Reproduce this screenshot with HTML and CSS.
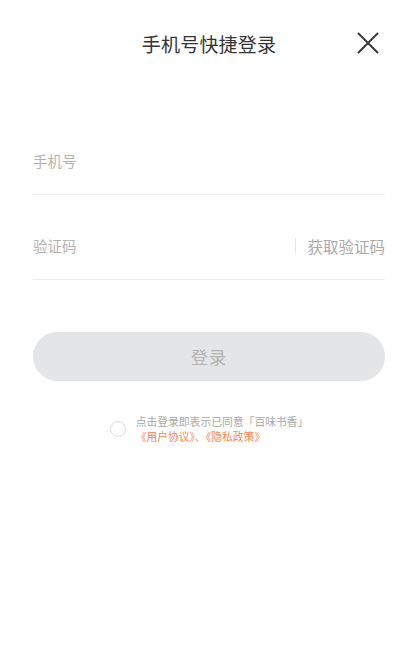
FILE: index.html
```html
<!DOCTYPE html>
<html lang="zh">
<head>
<meta charset="utf-8">
<link rel="stylesheet" href="styles.css">
</head>
<body>
<div class="page">
  <header class="header">
    <h1 class="title">手机号快捷登录</h1>
    <span class="close" aria-label="关闭">
      <svg width="22" height="22" viewBox="0 0 22 22"><path d="M1 1 L21 21 M21 1 L1 21" stroke="#333" stroke-width="1.8" fill="none"/></svg>
    </span>
  </header>
  <form class="form">
    <div class="field field-phone">
      <span class="placeholder">手机号</span>
    </div>
    <div class="field field-code">
      <span class="placeholder">验证码</span>
      <span class="code-btn"><span class="sep"></span>获取验证码</span>
    </div>
    <div class="submit">登录</div>
  </form>
  <div class="agree">
    <span class="radio"></span>
    <div class="agree-text">
      <div>点击登录即表示已同意「百味书香」</div>
      <div class="links">《用户协议》、《隐私政策》</div>
    </div>
  </div>
</div>
</body>
</html>
```
FILE: styles.css
```css
* { box-sizing: border-box; }
html, body { margin: 0; padding: 0; background: #fff; }
body {
  font-family: "Noto Sans CJK SC", "Noto Sans", sans-serif;
  width: 418px;
  height: 664px;
  overflow: hidden;
}
.page { padding: 0 33px; }
.header {
  position: relative;
  height: 86px;
  display: flex;
  align-items: center;
  justify-content: center;
}
.title {
  margin: 0;
  font-size: 19px;
  font-weight: 400;
  color: #333;
  letter-spacing: 0.2px;
}
.close {
  position: absolute;
  right: 6px;
  top: 32px;
  width: 22px;
  height: 22px;
  display: flex;
}
.form { padding-top: 43px; }
.field {
  border-bottom: 1px solid #f0f0f0;
  display: flex;
  align-items: flex-start;
  justify-content: space-between;
}
.field-phone { height: 66px; padding-top: 21px; }
.field-code { height: 85px; padding-top: 40px; }
.placeholder {
  font-size: 14.5px;
  line-height: 21px;
  color: #b3b3b3;
}
.code-btn {
  display: flex;
  align-items: center;
  height: 21px;
  font-size: 15.5px;
  color: #aaa;
  margin-right: 0;
}
.sep {
  width: 1px;
  height: 15px;
  background: #e6e6e6;
  margin-right: 11px;
}
.submit {
  margin-top: 52px;
  height: 49px;
  border-radius: 25px;
  background: #e4e5e6;
  color: #b3b3b3;
  font-size: 17px;
  display: flex;
  align-items: center;
  justify-content: center;
  letter-spacing: 1px;
}
.agree {
  margin-top: 33px;
  display: flex;
  justify-content: center;
  align-items: center;
  gap: 10px;
}
.radio {
  width: 16px;
  height: 16px;
  border: 1px solid #dcdcdc;
  border-radius: 50%;
  flex: none;
}
.agree-text {
  font-size: 10.8px;
  line-height: 15px;
  color: #a8a8a8;
}
.links { color: #f2894f; }
```
